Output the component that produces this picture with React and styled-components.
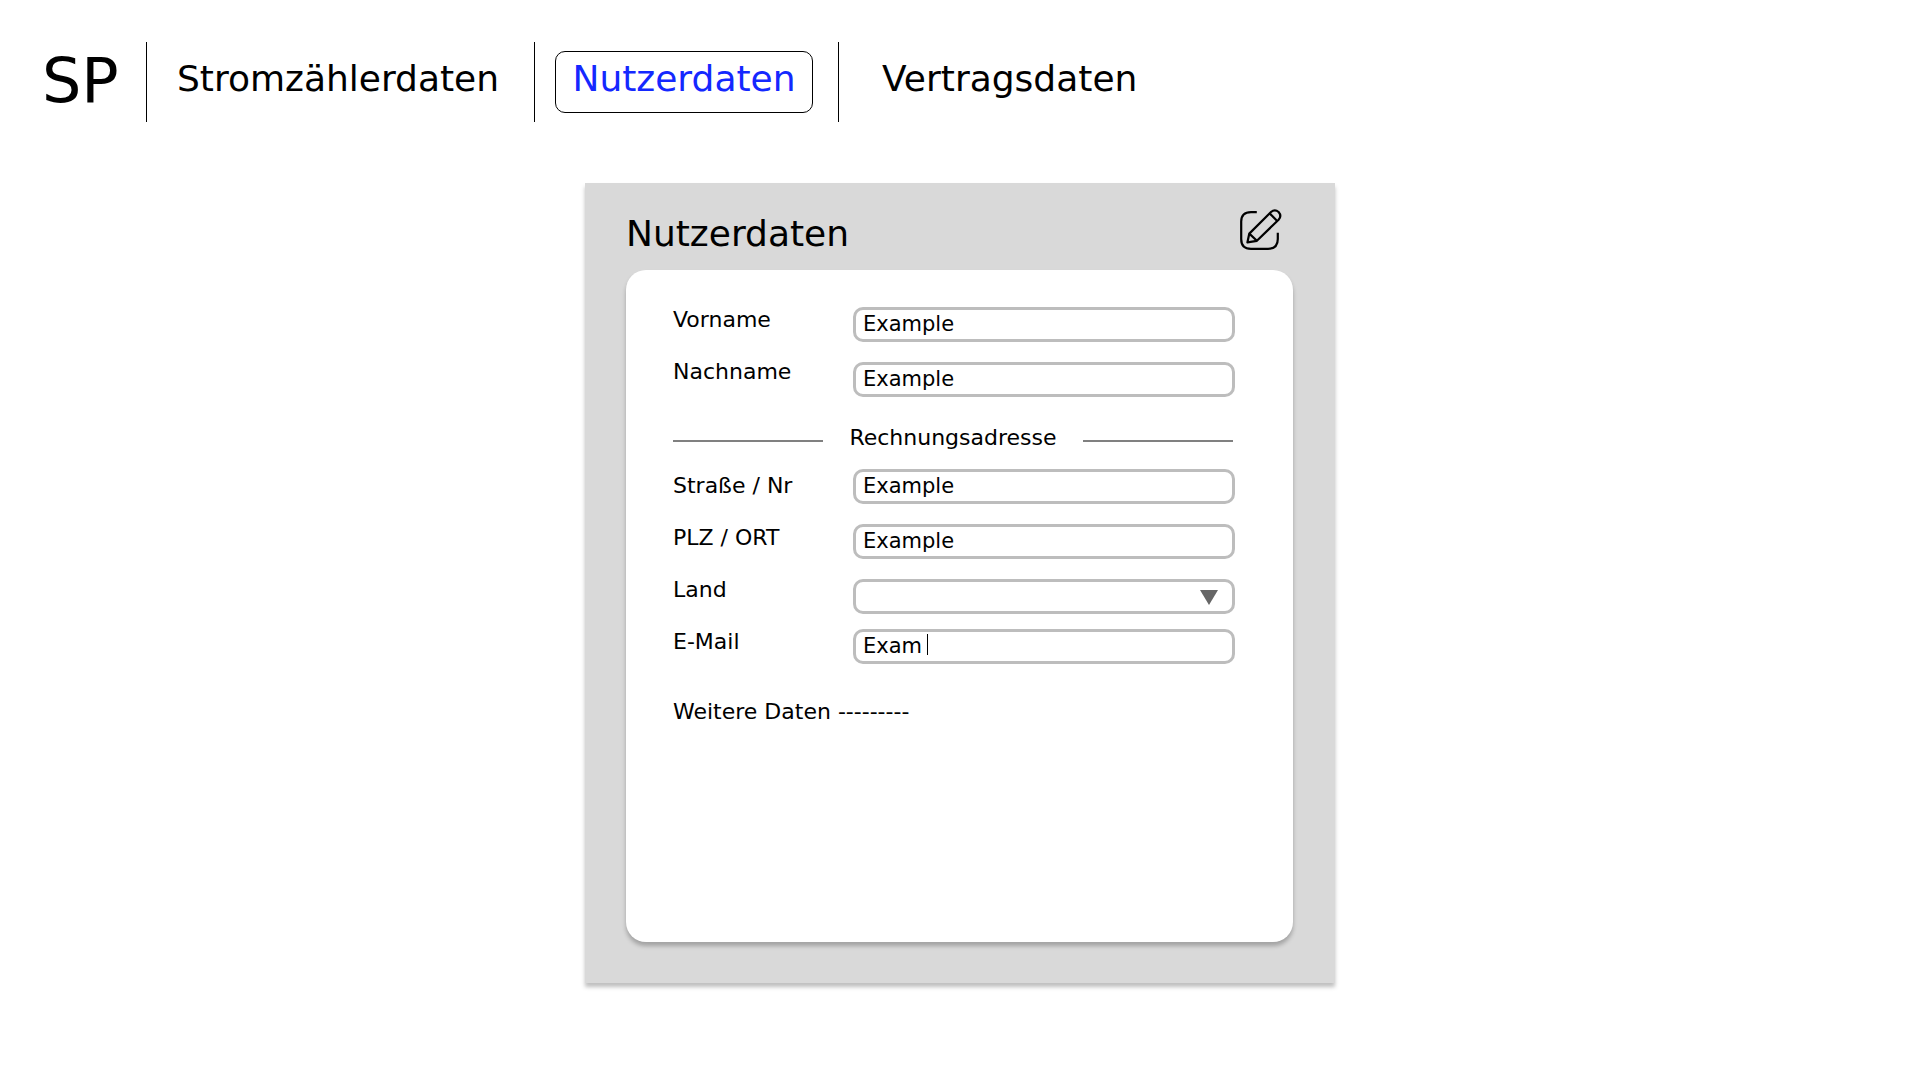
import React from "react";
import styled, { createGlobalStyle } from "styled-components";

const GlobalStyle = createGlobalStyle`
  *, *::before, *::after { box-sizing: border-box; }
  body {
    margin: 0;
    background: #ffffff;
    color: #000000;
    font-family: "DejaVu Sans", Verdana, sans-serif;
    font-size: 22px;
  }
  h1, h2, p, ul { margin: 0; padding: 0; font-weight: 400; }
`;

const TopBar = styled.header`
  display: flex;
  padding-top: 42px;
`;

const Brand = styled.h1`
  flex: none;
  width: 146px;
  padding-left: 42px;
  font-size: 62px;
  line-height: 78px;
`;

const NavList = styled.ul`
  display: grid;
  grid-template-columns: 388px 304px auto;
  list-style: none;
`;

const NavItem = styled.li`
  display: flex;
  align-items: center;
  justify-content: center;
  height: 80px;
  padding: ${(p) => (p.$last ? "0 0 0 26px" : "0 5px 0 0")};
  border-left: 1px solid #000000;
`;

const NavLink = styled.a`
  padding: 0 16px 6px;
  border: 1px solid ${(p) => (p.$active ? "#000000" : "transparent")};
  border-radius: 10px;
  color: ${(p) => (p.$active ? "#1428ff" : "#000000")};
  font-size: 36px;
  line-height: 54px;
  text-decoration: none;
`;

const Main = styled.main`
  display: flex;
  justify-content: center;
  padding: 61px 0;
`;

const Card = styled.section`
  width: min(750px, 100%);
  padding: 0 42px 41px 41px;
  background: #d9d9d9;
  box-shadow: 0 4px 4px rgba(0, 0, 0, 0.25);
`;

const CardHeader = styled.div`
  display: flex;
  align-items: flex-end;
  justify-content: space-between;
  padding: 26px 11px 19px 0;
`;

const CardTitle = styled.h2`
  font-size: 36px;
  line-height: 34px;
`;

const EditButton = styled.button`
  width: 42px;
  height: 42px;
  padding: 0;
  border: 0;
  background: none;
  cursor: pointer;

  svg { display: block; }
`;

const Panel = styled.form`
  min-height: 672px;
  padding: 24px 58px 24px 47px;
  border-radius: 20px;
  background: #ffffff;
  box-shadow: 0 4px 4px rgba(0, 0, 0, 0.25);
`;

const FieldGroup = styled.div`
  display: grid;
  grid-template-columns: 180px 1fr;
`;

const Labels = styled.div`
  display: flex;
  flex-direction: column;
`;

const Label = styled.label`
  line-height: 52px;
`;

const Fields = styled.div`
  display: flex;
  flex-direction: column;
  gap: ${(p) => p.$gap};
  padding-top: ${(p) => p.$inset || "0"};
`;

const control = `
  display: block;
  width: 100%;
  height: 35px;
  margin: 0;
  padding: 0 7px 2px;
  border: 3px solid #bdbdbd;
  border-radius: 10px;
  outline: none;
  background: #ffffff;
  color: #000000;
  font: inherit;
  font-size: 21px;
`;

const TextInput = styled.input`${control}`;

const Select = styled.select`
  ${control}
  appearance: none;
`;

const ControlWrap = styled.div`
  position: relative;
`;

const Arrow = styled.svg`
  position: absolute;
  top: 11px;
  right: 17px;
  pointer-events: none;
`;

const Caret = styled.span`
  position: absolute;
  top: 5px;
  left: 74px;
  width: 1px;
  height: 21px;
  background: #000000;
  pointer-events: none;
`;

const Separator = styled.div`
  display: flex;
  align-items: center;
  justify-content: space-between;
  padding: 24px 2px 0 0;
`;

const Line = styled.span`
  width: 150px;
  height: 2px;
  background: #808080;
`;

const SeparatorText = styled.span`
  padding-bottom: 6px;
  line-height: 32px;
`;

const Note = styled.p`
  margin-top: 18px;
  line-height: 52px;
`;

function EditIcon() {
  return (
    <svg width="42" height="42" viewBox="0 0 42 42" fill="none" stroke="#000000" strokeWidth="2.2" aria-hidden="true">
      <path d="M16.8 3.1H11Q1.2 3.1 1.2 12.5V30Q1.2 39.8 11 39.8H28Q37.8 39.8 37.8 30V23.8" />
      <path d="M7.4 33.4L9.3 24.6L31 3Q34.8 -.4 38.6 3Q42 7 38.6 10.7L16.9 31.8L7.4 33.4Z" strokeLinejoin="round" />
      <path d="M9.3 24.6L16.9 31.8M29.6 4.4L37.2 12" />
    </svg>
  );
}

function App() {
  return (
    <>
      <GlobalStyle />
      <TopBar>
        <Brand>SP</Brand>
        <nav>
          <NavList>
            <NavItem><NavLink href="#strom">Stromzählerdaten</NavLink></NavItem>
            <NavItem><NavLink href="#nutzer" $active aria-current="page">Nutzerdaten</NavLink></NavItem>
            <NavItem $last><NavLink href="#vertrag">Vertragsdaten</NavLink></NavItem>
          </NavList>
        </nav>
      </TopBar>
      <Main>
        <Card>
          <CardHeader>
            <CardTitle>Nutzerdaten</CardTitle>
            <EditButton type="button" aria-label="Bearbeiten"><EditIcon /></EditButton>
          </CardHeader>
          <Panel>
            <FieldGroup>
              <Labels>
                <Label htmlFor="vorname">Vorname</Label>
                <Label htmlFor="nachname">Nachname</Label>
              </Labels>
              <Fields $inset="13px" $gap="20px">
                <TextInput id="vorname" defaultValue="Example" />
                <TextInput id="nachname" defaultValue="Example" />
              </Fields>
            </FieldGroup>
            <Separator>
              <Line />
              <SeparatorText>Rechnungsadresse</SeparatorText>
              <Line />
            </Separator>
            <FieldGroup>
              <Labels>
                <Label htmlFor="strasse">Straße / Nr</Label>
                <Label htmlFor="plz">PLZ / ORT</Label>
                <Label htmlFor="land">Land</Label>
                <Label htmlFor="email">E-Mail</Label>
              </Labels>
              <Fields $inset="9px" $gap="20px">
                <TextInput id="strasse" defaultValue="Example" />
                <TextInput id="plz" defaultValue="Example" />
                <Fields $gap="15px">
                  <ControlWrap>
                    <Select id="land" defaultValue="">
                      <option value="" />
                    </Select>
                    <Arrow width="18" height="15" viewBox="0 0 18 15" aria-hidden="true">
                      <path d="M0 0H18L9 15Z" fill="#666666" />
                    </Arrow>
                  </ControlWrap>
                  <ControlWrap>
                    <TextInput id="email" defaultValue="Exam" />
                    <Caret />
                  </ControlWrap>
                </Fields>
              </Fields>
            </FieldGroup>
            <Note>Weitere Daten ---------</Note>
          </Panel>
        </Card>
      </Main>
    </>
  );
}

export default App;
